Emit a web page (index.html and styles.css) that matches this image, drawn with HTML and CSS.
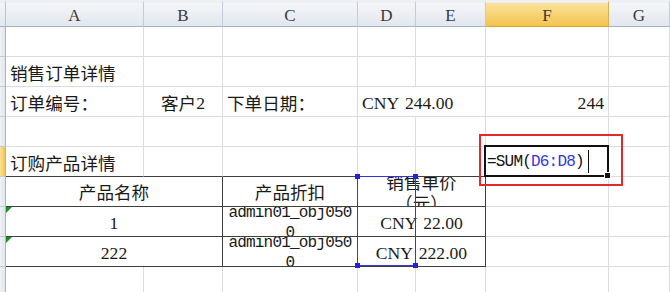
FILE: index.html
```html
<!DOCTYPE html>
<html lang="zh-CN">
<head>
<meta charset="utf-8">
<title>Sheet</title>
<link rel="stylesheet" href="styles.css">
</head>
<body>
<div class="sheet">
  <div class="corner"></div>
  <div class="hd">A</div><div class="hd">B</div><div class="hd">C</div><div class="hd">D</div><div class="hd">E</div><div class="hd sel">F</div><div class="hd">G</div>

  <div class="rh"></div><div class="c"></div><div class="c"></div><div class="c"></div><div class="c"></div><div class="c"></div><div class="c"></div><div class="c"></div>

  <div class="rh"></div><div class="c">销售订单详情</div><div class="c"></div><div class="c"></div><div class="c"></div><div class="c"></div><div class="c"></div><div class="c"></div>

  <div class="rh"></div><div class="c">订单编号：</div><div class="c ctr">客户<span class="n">2</span></div><div class="c">下单日期：</div><div class="c span2"><span class="n sp">CNY 244.00</span></div><div class="c right"><span class="n">244</span></div><div class="c"></div>

  <div class="rh"></div><div class="c"></div><div class="c"></div><div class="c"></div><div class="c"></div><div class="c"></div><div class="c"></div><div class="c"></div>

  <div class="rh sel"></div><div class="c top">订购产品详情</div><div class="c top"></div><div class="c top"></div><div class="c top"></div><div class="c top"></div><div class="c active"><span class="m">=SUM(<span class="ref">D6:D8</span>)</span><span class="caret"></span></div><div class="c"></div>

  <div class="rh"></div><div class="c t span2 mid">产品名称</div><div class="c t mid">产品折扣</div><div class="c t span2 wrap">销售单价<br>（元）</div><div class="c"></div><div class="c"></div>

  <div class="rh"></div><div class="c t span2 ctr"><span class="flag"></span><span class="n">1</span></div><div class="c t code"><div class="m lines">admin01_obj050<br>0</div></div><div class="c t span2 ctr"><span class="n sp">CNY 22.00</span></div><div class="c"></div><div class="c"></div>

  <div class="rh"></div><div class="c t span2 ctr"><span class="flag"></span><span class="n">222</span></div><div class="c t code"><div class="m lines">admin01_obj050<br>0</div></div><div class="c t span2 ctr"><span class="n sp">CNY 222.00</span></div><div class="c"></div><div class="c"></div>

  <div class="rh"></div><div class="c"></div><div class="c"></div><div class="c"></div><div class="c"></div><div class="c"></div><div class="c"></div><div class="c"></div>

  <div class="range">
    <span class="hdl tl"></span><span class="hdl tr"></span><span class="hdl bl"></span><span class="hdl br"></span>
  </div>
  <div class="mark"></div>
</div>
</body>
</html>
```

FILE: styles.css
```css
* { box-sizing: border-box; margin: 0; padding: 0; }

body {
  margin: 0;
  width: 670px;
  height: 292px;
  overflow: hidden;
  background: #ffffff;
  font-family: "Noto Sans CJK SC", sans-serif;
  color: #1a1a1a;
}

.sheet {
  position: relative;
  display: grid;
  grid-template-columns: 6px 138px 79px 135px 58px 70px 123px 61px;
  grid-template-rows: 27px repeat(9, 30px);
}

.corner {
  background: linear-gradient(#f4f6f9, #e2e7ee);
  border-right: 1px solid #b9c3cf;
  border-bottom: 1px solid #9eb6ce;
  border-top: 3px solid #eef0f3;
}

.hd {
  display: flex;
  align-items: center;
  justify-content: center;
  padding-top: 3px;
  border-top: 3px solid #eef0f3;
  background: linear-gradient(#f4f6f9, #e2e7ee);
  border-right: 1px solid #c3cbd6;
  border-bottom: 1px solid #9eb6ce;
  font-family: "Liberation Serif", serif;
  font-size: 17px;
  color: #3a3a3a;
}

.hd.sel {
  background: linear-gradient(#fbe29a, #f3c44f);
  border-bottom-color: #e3a32a;
  border-right-color: #d9b055;
}

.rh {
  background: linear-gradient(90deg, #eef1f5, #e2e7ee);
  border-right: 1px solid #9eb6ce;
  border-bottom: 1px solid #c3cbd6;
}

.rh.sel {
  background: linear-gradient(90deg, #fbe29a, #f3c44f);
}

.c {
  display: flex;
  align-items: flex-end;
  padding: 0 3px 3px 4px;
  border-right: 1px solid #dadcdd;
  border-bottom: 1px solid #dadcdd;
  font-size: 17.6px;
  line-height: 20px;
  white-space: nowrap;
  overflow: hidden;
}

.m {
  font-family: "Liberation Mono", monospace;
  font-size: 16px;
  letter-spacing: -0.8px;
}

.n {
  font-family: "Liberation Serif", serif;
  font-size: 17.6px;
}

.n.sp { word-spacing: 2px; }

.span2 { grid-column: span 2; }
.ctr { justify-content: center; padding-left: 0; padding-right: 0; }
.right { justify-content: flex-end; padding-right: 4px; }

.c.top { border-bottom-color: #3f3f3f; }

.c.t {
  border-right-color: #3f3f3f;
  border-bottom-color: #3f3f3f;
  position: relative;
}

.c.mid { justify-content: center; align-items: center; padding: 0; }

.c.wrap {
  justify-content: center;
  align-items: center;
  text-align: center;
  white-space: normal;
  line-height: 21px;
  padding: 0;
}

.c.code {
  align-items: flex-start;
  justify-content: center;
  padding: 0;
}

.lines {
  margin-top: -4px;
  text-align: center;
  line-height: 20px;
}

.flag {
  position: absolute;
  left: 0;
  top: 0;
  width: 0;
  height: 0;
  border-top: 6px solid #1f8b2c;
  border-right: 6px solid transparent;
}

.active {
  position: relative;
  overflow: visible;
  align-items: center;
  padding: 0 0 0 1px;
  color: #111;
}

.active::after {
  content: "";
  position: absolute;
  left: -2px;
  top: -2px;
  right: -1px;
  bottom: -1px;
  border: 2px solid #111;
}

.active::before {
  content: "";
  position: absolute;
  right: -3px;
  bottom: -3px;
  width: 5px;
  height: 5px;
  background: #111;
  border: 1px solid #fff;
  z-index: 2;
}

.ref { color: #3535e0; }

.caret {
  display: inline-block;
  width: 1px;
  height: 23px;
  margin-left: 4px;
  background: #111;
}

.range {
  position: absolute;
  left: 357px;
  top: 176px;
  width: 59px;
  height: 90px;
  border: 1px solid #3434e6;
}

.hdl {
  position: absolute;
  width: 5px;
  height: 5px;
  background: #2020e0;
}
.hdl.tl { left: -3px; top: -3px; }
.hdl.tr { right: -3px; top: -3px; }
.hdl.bl { left: -3px; bottom: -3px; }
.hdl.br { right: -3px; bottom: -3px; }

.mark {
  position: absolute;
  left: 479px;
  top: 134px;
  width: 144px;
  height: 52px;
  border: 2px solid #e3282e;
}
```
